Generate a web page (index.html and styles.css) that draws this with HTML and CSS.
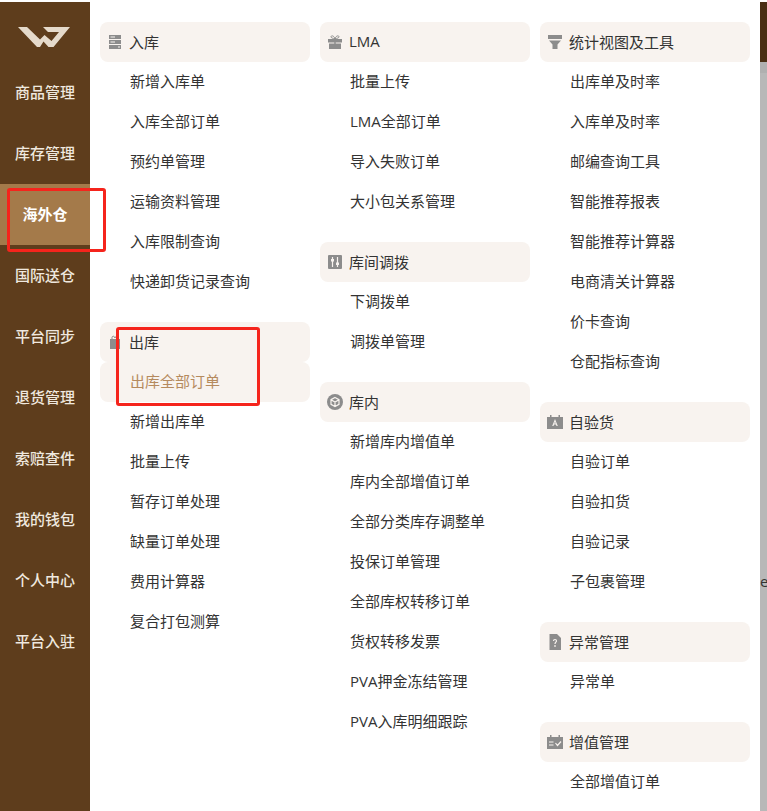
FILE: index.html
```html
<!DOCTYPE html>
<html lang="zh-CN">
<head>
<meta charset="utf-8">
<title>海外仓菜单</title>
<link rel="stylesheet" href="styles.css">
</head>
<body>
<div class="app">
  <nav class="sidebar">
    <div class="logo">
      <svg width="52" height="20" viewBox="0 0 52 20"><path class="logo-mark" d="M0 0H9L22 12.500L26.500 8L33.500 14L41 5H30L25 0H52L35.500 20H30.500L25.500 14.500L22 20H19Z"/></svg>
    </div>
    <a class="nav-item">商品管理</a>
    <a class="nav-item">库存管理</a>
    <a class="nav-item active">海外仓</a>
    <a class="nav-item">国际送仓</a>
    <a class="nav-item">平台同步</a>
    <a class="nav-item">退货管理</a>
    <a class="nav-item">索赔查件</a>
    <a class="nav-item">我的钱包</a>
    <a class="nav-item">个人中心</a>
    <a class="nav-item">平台入驻</a>
  </nav>
  <main class="columns">
    <div class="column">
      <section class="group">
        <h3 class="group-title"><svg class="icon" viewBox="0 0 14 14"><path d="M1 0H13V4H1ZM1 5H13V9H1ZM1 10H13V14H1Z"/><path class="icon-cut" d="M2.500 1.500H7V2.500H2.500ZM2.500 6.500H7V7.500H2.500ZM10 11.500H12V12.500H10Z"/></svg>入库</h3>
        <a class="link">新增入库单</a>
        <a class="link">入库全部订单</a>
        <a class="link">预约单管理</a>
        <a class="link">运输资料管理</a>
        <a class="link">入库限制查询</a>
        <a class="link">快递卸货记录查询</a>
      </section>
      <section class="group">
        <h3 class="group-title"><svg class="icon" viewBox="0 0 14 14"><path d="M2 4H12V14H2Z"/><path d="M4 4V2.500C4 1 6.500 .5 7 3C7.500 .5 10 1 10 2.500V4" fill="none" stroke="#8c8c8c"/></svg>出库</h3>
        <a class="link current">出库全部订单</a>
        <a class="link">新增出库单</a>
        <a class="link">批量上传</a>
        <a class="link">暂存订单处理</a>
        <a class="link">缺量订单处理</a>
        <a class="link">费用计算器</a>
        <a class="link">复合打包测算</a>
      </section>
    </div>
    <div class="column">
      <section class="group">
        <h3 class="group-title"><svg class="icon" viewBox="0 0 14 14"><path d="M0 4H14V7.500H0ZM1 8.500H6.300V14H1ZM7.700 8.500H13V14H7.700ZM6.300 4H7.700V14H6.300Z"/><path d="M7 3.500C5 3.500 3 3 3 1.800S5.500 0 7 3.500C8.500 0 11 .6 11 1.800S9 3.500 7 3.500Z" fill="none" stroke="#8c8c8c"/></svg>LMA</h3>
        <a class="link">批量上传</a>
        <a class="link">LMA全部订单</a>
        <a class="link">导入失败订单</a>
        <a class="link">大小包关系管理</a>
      </section>
      <section class="group">
        <h3 class="group-title"><svg class="icon" viewBox="0 0 14 14"><rect width="14" height="14" rx="1"/><path class="icon-line" d="M4.500 2V12M9.500 2V12"/><path class="icon-cut" d="M3 4H6V6.500H3ZM8 7.500H11V10H8Z"/></svg>库间调拨</h3>
        <a class="link">下调拨单</a>
        <a class="link">调拨单管理</a>
      </section>
      <section class="group">
        <h3 class="group-title"><svg class="icon icon-wide" viewBox="0 0 16 16"><circle cx="8" cy="8" r="8"/><path class="icon-line" d="M8 3.500L12 5.700V10.300L8 12.500L4 10.300V5.700ZM4 5.700L8 8L12 5.700M8 8V12.500"/></svg>库内</h3>
        <a class="link">新增库内增值单</a>
        <a class="link">库内全部增值订单</a>
        <a class="link">全部分类库存调整单</a>
        <a class="link">投保订单管理</a>
        <a class="link">全部库权转移订单</a>
        <a class="link">货权转移发票</a>
        <a class="link">PVA押金冻结管理</a>
        <a class="link">PVA入库明细跟踪</a>
      </section>
    </div>
    <div class="column">
      <section class="group">
        <h3 class="group-title"><svg class="icon icon-wide" viewBox="0 0 16 16"><path d="M1 1H15V5H1ZM2 6.500H14L10.500 10.500V15H5.500V10.500Z"/></svg>统计视图及工具</h3>
        <a class="link">出库单及时率</a>
        <a class="link">入库单及时率</a>
        <a class="link">邮编查询工具</a>
        <a class="link">智能推荐报表</a>
        <a class="link">智能推荐计算器</a>
        <a class="link">电商清关计算器</a>
        <a class="link">价卡查询</a>
        <a class="link">仓配指标查询</a>
      </section>
      <section class="group">
        <h3 class="group-title"><svg class="icon icon-wide" viewBox="0 0 16 16"><path d="M0 3H3V1H4.500V3H11.500V1H13V3H16V15H0Z"/><path class="icon-cut" d="M8 5L10.800 12H9.500L9 10.500H7L6.500 12H5.200ZM7.400 9.500H8.600L8 7.500Z"/></svg>自验货</h3>
        <a class="link">自验订单</a>
        <a class="link">自验扣货</a>
        <a class="link">自验记录</a>
        <a class="link">子包裹管理</a>
      </section>
      <section class="group">
        <h3 class="group-title"><svg class="icon icon-wide" viewBox="0 0 16 16"><path d="M2.500 0H10L14 4V16H2.500Z"/><path class="icon-line" d="M6.500 7C6.500 5 9.500 5 9.500 7C9.500 8.200 8 8.200 8 10M8 11V13"/></svg>异常管理</h3>
        <a class="link">异常单</a>
      </section>
      <section class="group">
        <h3 class="group-title"><svg class="icon icon-wide" viewBox="0 0 16 16"><path d="M0 3H3V1H4.500V3H11.500V1H13V3H16V15H0Z"/><path class="icon-line" d="M2 8H6.500M2 11H6.500M8.500 9L10.500 11.500L14 7.500"/></svg>增值管理</h3>
        <a class="link">全部增值订单</a>
      </section>
    </div>
  </main>
  <aside class="backdrop">
    <div class="backdrop-head"></div>
    <div class="backdrop-band"></div>
    <div class="backdrop-body"><span class="backdrop-text">e</span></div>
  </aside>
  <div class="mark mark-nav"></div>
  <div class="mark mark-menu"></div>
</div>
</body>
</html>
```
FILE: styles.css
```css
* {
  box-sizing: border-box;
}

html,
body {
  margin: 0;
  height: 100%;
  background: #fff;
  overflow: hidden;
}

body {
  font-family: "Open Sans", "Noto Sans CJK SC", sans-serif;
  font-size: 15px;
  color: #333;
}

.app {
  position: relative;
  display: flex;
  height: 811px;
  padding-top: 2px;
}

.sidebar {
  flex: 0 0 90px;
  background: #5e3d1c;
}

.logo {
  display: flex;
  height: 60px;
  padding: 25px 0 0 18px;
}

.logo-mark {
  fill: #e5dacb;
}

.nav-item {
  display: block;
  height: 61px;
  line-height: 61px;
  text-align: center;
  color: #efe8df;
  font-weight: 500;
}

.nav-item.active {
  background: #a47a4a;
  color: #fff;
  font-weight: 700;
}

.columns {
  flex: 0 0 660px;
  display: flex;
  gap: 10px;
  padding: 20px 0 0 10px;
}

.column {
  flex: 0 0 210px;
  display: flex;
  flex-direction: column;
  gap: 20px;
}

.group-title {
  display: flex;
  align-items: center;
  gap: 7px;
  height: 40px;
  margin: 0;
  padding: 0 0 2px 8px;
  background: #f8f3ef;
  border-radius: 8px;
  font-size: 15px;
  font-weight: 400;
  color: #333;
}

.icon {
  flex: 0 0 14px;
  width: 14px;
  height: 14px;
  margin-top: 2px;
  fill: #8c8c8c;
}

.icon-wide {
  flex-basis: 16px;
  width: 16px;
  height: 16px;
  margin-left: -1px;
  margin-right: -1px;
}

.icon-cut {
  fill: #f8f3ef;
}

.icon-line {
  fill: none;
  stroke: #f8f3ef;
  stroke-width: 1.200;
}

.link {
  display: block;
  height: 40px;
  line-height: 38px;
  padding-left: 30px;
  border-radius: 8px;
  color: #333;
}

.link.current {
  background: #f8f3ef;
  color: #b58a5e;
}

.backdrop {
  flex: 0 0 7px;
  margin-left: 10px;
  display: flex;
  flex-direction: column;
  overflow: hidden;
}

.backdrop-head {
  flex: 0 0 60px;
  background: #4a2f14;
}

.backdrop-band {
  flex: 0 0 11px;
  background: #b0b0b0;
}

.backdrop-body {
  flex: 1;
  background: #b8b8b8;
  padding-top: 498px;
}

.backdrop-text {
  display: block;
  line-height: 20px;
  color: #333;
}

.mark {
  position: absolute;
  border: 3px solid #f5241c;
  border-radius: 3px;
}

.mark-nav {
  left: 7px;
  top: 188px;
  width: 99px;
  height: 64px;
}

.mark-menu {
  left: 116px;
  top: 327px;
  width: 144px;
  height: 79px;
}
```
